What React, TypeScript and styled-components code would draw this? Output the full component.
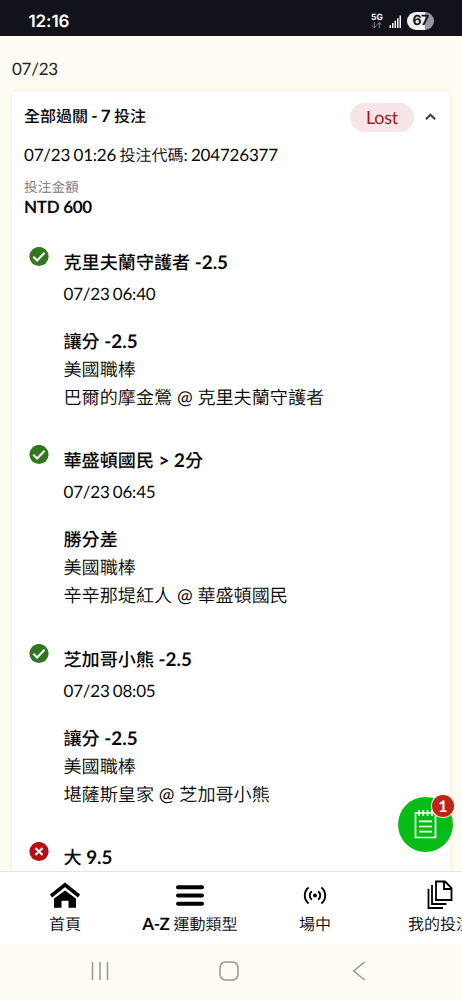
import React from "react";
import styled, { createGlobalStyle } from "styled-components";

const Global = createGlobalStyle`
  * { box-sizing: border-box; }
  html, body { margin: 0; padding: 0; }
  body {
    background: #fffcf3;
    color: #080808;
    font-family: Lato, "Noto Sans CJK TC", sans-serif;
    overflow: hidden;
    text-rendering: geometricPrecision;
  }
`;

const Screen = styled.div`
  position: relative;
  width: 462px;
  height: 1000px;
  display: flex;
  flex-direction: column;
  overflow: hidden;
`;

const StatusBar = styled.header`
  flex: 0 0 36px;
  display: flex;
  align-items: center;
  justify-content: space-between;
  padding: 6px 28px 0 28.5px;
  background: #12131a;
  color: #fff;
`;

const Clock = styled.span`
  font: 600 17px/20px Inter, sans-serif;
  letter-spacing: -0.1px;
  padding-top: 1px;
`;

const StatusIcons = styled.div`
  display: flex;
  align-items: center;
`;

const Network = styled.div`
  display: flex;
  flex-direction: column;
  align-items: center;
  width: 12px;
  margin-right: 6px;
  font: 700 8.5px/8px Inter, sans-serif;
`;

const Battery = styled.span`
  width: 27px;
  height: 18px;
  margin-left: 5px;
  border-radius: 9px;
  background: linear-gradient(90deg, #f2f2f4 67%, #98999d 67%);
  color: #15161b;
  font: 700 14px/18px Inter, sans-serif;
  letter-spacing: -0.6px;
  text-align: center;
`;

const Content = styled.main`
  flex: 1 1 0;
  min-height: 0;
  overflow: hidden;
  padding: 0 12px;
`;

const DateHeading = styled.div`
  height: 55px;
  padding-top: 23px;
  color: #222;
  font-size: 17px;
  line-height: 20px;
  letter-spacing: -0.25px;
`;

const Card = styled.section`
  height: 900px;
  padding: 10px 12px;
  border-radius: 2px;
  background: #fff;
  box-shadow: 0 0 4px rgba(90, 80, 30, 0.13);
`;

const CardHeader = styled.div`
  display: flex;
  align-items: center;
  height: 32px;
`;

const CardTitle = styled.h2`
  flex: 1;
  margin: 0 0 2px;
  font-size: 17px;
  line-height: 24px;
  height: 24px;
  font-weight: 700;
  word-spacing: -0.9px;
`;

const Status = styled.span`
  width: 64px;
  height: 29px;
  border-radius: 15px;
  background: #f8e5e5;
  color: #b3121b;
  font-size: 18px;
  line-height: 29px;
  letter-spacing: -0.3px;
  text-align: center;
  margin-right: 10px;
`;

const Chevron = styled.svg`
  margin-right: 1px;
`;

const Cjk = styled.span<{ $size?: number; $bold?: boolean }>`
  font-family: "Noto Sans CJK TC", sans-serif;
  font-size: ${(p) => (p.$size ? `${p.$size}px` : "inherit")};
  font-weight: ${(p) => (p.$bold ? 500 : 350)};
  letter-spacing: 0;
  line-height: 1;
`;

const Reference = styled.div`
  margin-top: 9px;
  font-size: 17px;
  line-height: 26px;
  height: 26px;
  letter-spacing: -0.2px;
  word-spacing: -0.8px;
  white-space: nowrap;
`;

const StakeLabel = styled.div`
  margin-top: 10px;
  color: #777;
  font-size: 13.7px;
  line-height: 18px;
  height: 18px;
`;

const Stake = styled.div`
  font-size: 17px;
  line-height: 22px;
  font-weight: 700;
  letter-spacing: -0.3px;
  margin-bottom: 29px;
`;

const Leg = styled.article`
  display: grid;
  grid-template-columns: 39.5px 1fr;
  height: 198.4px;
`;

const LegIcon = styled.div`
  padding: 0 0 0 5px;
  svg { display: block; }
`;

const LegTitle = styled.div`
  padding-top: 1px;
  height: 30px;
  font-size: 18.8px;
  line-height: 29px;
  font-weight: 700;
`;

const LegTime = styled.div`
  margin-top: 4px;
  font-size: 17px;
  line-height: 26px;
  height: 26px;
  letter-spacing: -0.2px;
  word-spacing: -1px;
  margin-bottom: 21px;
`;

const LegLine = styled.div<{ $bold?: boolean }>`
  font-size: 18.8px;
  line-height: 28px;
  height: 28px;
  font-weight: ${(p) => (p.$bold ? 700 : 400)};
  white-space: nowrap;
`;

const TabBar = styled.nav`
  flex: 0 0 73px;
  display: grid;
  grid-template-columns: repeat(4, 125px);
  padding-left: 2.5px;
  overflow: hidden;
  border-top: 1px solid #e4e4e2;
  background: #fff;
`;

const Tab = styled.div`
  display: flex;
  flex-direction: column;
  align-items: center;
  padding-top: 8px;
  font-size: 17px;
  line-height: 24px;
  white-space: nowrap;
  b { font-weight: 700; letter-spacing: -0.5px; }
  svg { display: block; margin-bottom: 4px; overflow: visible; }
`;

const SystemNav = styled.footer`
  flex: 0 0 56px;
  display: grid;
  grid-template-columns: repeat(3, 129.5px);
  justify-items: center;
  align-items: center;
  padding: 0 0 3px 35px;
  background: #fffcf5;
`;

const SlipButton = styled.div`
  position: absolute;
  left: 398px;
  top: 796.5px;
  width: 55px;
  height: 55px;
  display: flex;
  align-items: center;
  justify-content: center;
  border-radius: 50%;
  background: #06bd17;
`;

const SlipCount = styled.span`
  position: absolute;
  left: 34px;
  top: -1.5px;
  width: 22px;
  height: 22px;
  border-radius: 50%;
  background: #bd2420;
  box-shadow: 0 0 0 1px #fbe9c9;
  color: #fff;
  font-size: 16px;
  line-height: 23px;
  font-weight: 700;
  text-align: center;
`;

type LegData = { won: boolean; title: string; time: string; market: string; league: string; match: string };

const legs: LegData[] = [
  { won: true, title: "克里夫蘭守護者 -2.5", time: "07/23 06:40", market: "讓分 -2.5", league: "美國職棒", match: "巴爾的摩金鶯 @ 克里夫蘭守護者" },
  { won: true, title: "華盛頓國民 > 2分", time: "07/23 06:45", market: "勝分差", league: "美國職棒", match: "辛辛那堤紅人 @ 華盛頓國民" },
  { won: true, title: "芝加哥小熊 -2.5", time: "07/23 08:05", market: "讓分 -2.5", league: "美國職棒", match: "堪薩斯皇家 @ 芝加哥小熊" },
  { won: false, title: "大 9.5", time: "", market: "", league: "", match: "" },
];

/* Sets the Chinese runs of a line in their own size and weight. */
const Mixed = ({ text, size, bold }: { text: string; size?: number; bold?: boolean }) => (
  <>
    {text.split(/([\u4e00-\u9fff]+)/).map((part, i) =>
      i % 2 ? <Cjk key={i} $size={size} $bold={bold}>{part}</Cjk> : part
    )}
  </>
);

const ResultIcon = ({ won }: { won: boolean }) => (
  <svg width="20" height="20" viewBox="0 0 20 20" fill="none">
    <circle cx="10" cy="9.5" r="9.6" fill={won ? "#327620" : "#b80d12"} />
    <path d={won ? "M4.3 9.8 8.1 13.5 15.6 5.8" : "M6.4 5.9 13.6 13.1M13.6 5.9 6.4 13.1"} stroke="#fff" strokeWidth="2.1" />
  </svg>
);

export default function App() {
  return (
    <Screen>
      <Global />
      <StatusBar>
        <Clock>12:16</Clock>
        <StatusIcons>
          <Network>
            5G
            <svg width="12" height="7" viewBox="0 0 12 7" fill="none" stroke="#85868c" strokeWidth="1">
              <path d="M3.3 0v5.7M1 3.5 3.3 5.8 5.6 3.5M8.3 6.3V.7M6 2.9 8.3.6l2.3 2.3" />
            </svg>
          </Network>
          <svg width="13" height="13" viewBox="0 0 13 13" fill="#f4f4f6">
            <path d="M.5 10.3H2V13H.5zM3 8h1.5v5H3zM5.5 5.7H7V13H5.5zM8 3.2h1.5V13H8zM10.5.5H12V13h-1.5z" />
          </svg>
          <Battery>67</Battery>
        </StatusIcons>
      </StatusBar>
      <Content>
        <DateHeading>07/23</DateHeading>
        <Card>
          <CardHeader>
            <CardTitle><Mixed text="全部過關 - 7 投注" size={16} bold /></CardTitle>
            <Status>Lost</Status>
            <Chevron width="13" height="10" viewBox="0 0 13 10" fill="none" stroke="#444" strokeWidth="2.2">
              <path d="M1.9 7.3 6.5 2.7l4.6 4.6" />
            </Chevron>
          </CardHeader>
          <Reference><Mixed text="07/23 01:26 投注代碼: 204726377" size={16} /></Reference>
          <StakeLabel><Mixed text="投注金額" /></StakeLabel>
          <Stake>NTD 600</Stake>
          {legs.map((leg) => (
            <Leg key={leg.title}>
              <LegIcon><ResultIcon won={leg.won} /></LegIcon>
              <div>
                <LegTitle><Mixed text={leg.title} size={18.1} bold /></LegTitle>
                <LegTime>{leg.time}</LegTime>
                <LegLine $bold><Mixed text={leg.market} size={18.1} bold /></LegLine>
                <LegLine><Mixed text={leg.league} size={18.1} /></LegLine>
                <LegLine><Mixed text={leg.match} size={18.1} /></LegLine>
              </div>
            </Leg>
          ))}
        </Card>
      </Content>
      <TabBar>
        <Tab>
          <svg width="30" height="28" viewBox="0 0 30 28">
            <path d="M15 10.5 26 18.5v9.3H18.5v-7h-7v7H4v-9.3z" fill="#000" />
            <path d="M1 16 15 4.8l14 11.2" fill="none" stroke="#000" strokeWidth="3.6" />
            <path d="M3.5 18 15 8.9l11.5 9.1" fill="none" stroke="#fff" strokeWidth="1" />
          </svg>
          <span><Mixed text="首頁" size={16} /></span>
        </Tab>
        <Tab>
          <svg width="30" height="28" viewBox="0 0 30 28" stroke="#000" strokeWidth="4" strokeLinecap="round">
            <path d="M3 7.2h24M3 15.5h24M3 23.7h24" />
          </svg>
          <span><b>A-Z</b> <Mixed text="運動類型" size={16} /></span>
        </Tab>
        <Tab>
          <svg width="24" height="28" viewBox="0 0 24 28" fill="none" stroke="#000" strokeWidth="1.9">
            <circle cx="12" cy="15.5" r="1.9" fill="#000" stroke="none" />
            <path d="M8.8 11.2a5.6 5.6 0 0 0 0 8.6M15.2 11.2a5.6 5.6 0 0 1 0 8.6M5.6 7.4a10.5 10.5 0 0 0 0 16.2M18.4 7.4a10.5 10.5 0 0 1 0 16.2" />
          </svg>
          <span><Mixed text="場中" size={16} /></span>
        </Tab>
        <Tab>
          <svg width="26" height="28" viewBox="0 0 26 28" fill="none" stroke="#000" strokeWidth="1.8">
            <path d="M9 1.5h9l6.5 6.5v12H9zM17 1.5V9h7.5M5 5v19h14.5M1.5 8.7V28H16" />
          </svg>
          <span><Mixed text="我的投注" size={16} /></span>
        </Tab>
      </TabBar>
      <SystemNav>
        <svg width="20" height="20" viewBox="0 0 20 20" stroke="#979591" strokeWidth="1.5">
          <path d="M2.5 1v18M10 1v18M17.5 1v18" />
        </svg>
        <svg width="20" height="20" viewBox="0 0 20 20" fill="none" stroke="#979591" strokeWidth="1.5">
          <rect x="1" y="1" width="18" height="18" rx="5.5" />
        </svg>
        <svg width="14" height="20" viewBox="0 0 14 20" fill="none" stroke="#979591" strokeWidth="1.5">
          <path d="M12.6 1 1.8 10l10.8 9" />
        </svg>
      </SystemNav>
      <SlipButton>
        <svg width="24" height="32" viewBox="0 0 24 32" fill="none" stroke="#fff" strokeWidth="1.7">
          <path d="M1.5 5h20v24.5h-20z" />
          <path d="M5 2v6M9.3 2v6M13.6 2v6M17.9 2v6M5 13.3h13M5 18.5h13M5 23.7h13" />
        </svg>
        <SlipCount>1</SlipCount>
      </SlipButton>
    </Screen>
  );
}
